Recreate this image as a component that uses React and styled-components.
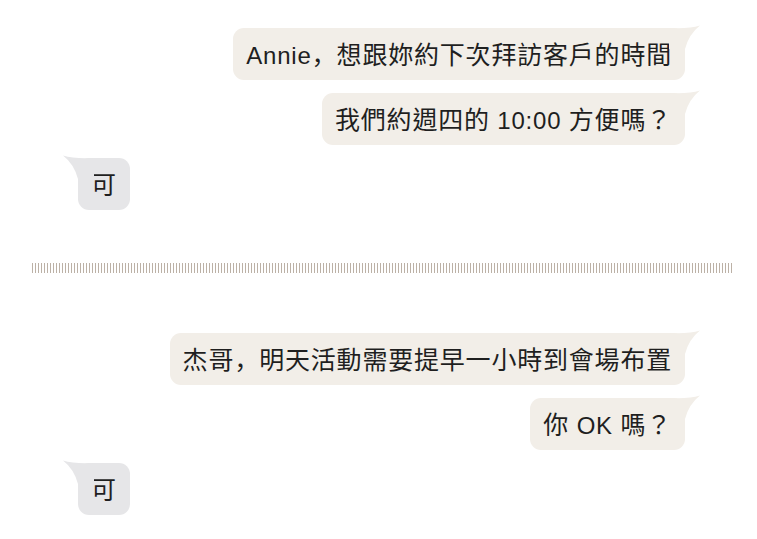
import styled, { createGlobalStyle } from "styled-components";

const GlobalStyle = createGlobalStyle`
  html, body {
    margin: 0;
    padding: 0;
    background: #ffffff;
  }
  body {
    font-family: "Noto Sans CJK TC", "Liberation Sans", sans-serif;
    color: #1f1f1f;
  }
`;

const Page = styled.div`
  width: 757px;
  height: 539px;
  box-sizing: border-box;
  padding-top: 28px;
  overflow: hidden;
`;

const Thread = styled.div`
  display: flex;
  flex-direction: column;
  gap: 13px;
  padding: 0 72px 0 78px;
`;

const Row = styled.div`
  display: flex;
  justify-content: ${(props) => (props.$mine ? "flex-end" : "flex-start")};
`;

const Bubble = styled.div`
  position: relative;
  box-sizing: border-box;
  height: 52px;
  padding: 12px 13px 14px 13px;
  border-radius: 11px;
  font-family: "Noto Sans CJK TC", sans-serif;
  font-size: 25px;
  line-height: 26px;
  letter-spacing: 0.8px;
  text-spacing-trim: space-all;
  white-space: nowrap;
  background: ${(props) => (props.$mine ? "#f2eee8" : "#e6e6e8")};
`;

const Latin = styled.span`
  font-family: "Liberation Sans", Arial, sans-serif;
  font-size: 24px;
`;

const Comma = styled.span`
  display: inline-block;
  width: 1em;
  font-family: "Noto Sans CJK SC", sans-serif;
`;

const TailSvg = styled.svg`
  position: absolute;
  top: -3px;
  width: 36px;
  height: 26px;
  ${(props) => (props.$mine ? "right: -16px;" : "left: -16px; transform: scaleX(-1);")}
`;

const Divider = styled.div`
  height: 10px;
  margin: 53px 24px 60px 32px;
  background: repeating-linear-gradient(
    to right,
    #bcb1a6 0,
    #bcb1a6 1.5px,
    transparent 1.5px,
    transparent 3px
  );
`;

function Tail({ mine }) {
  return (
    <TailSvg $mine={mine} viewBox="0 0 36 26">
      <path
        d="M4 3 Q 24 4 35 0.5 Q 24 9 20 24 L 4 24 Z"
        fill={mine ? "#f2eee8" : "#e6e6e8"}
      />
    </TailSvg>
  );
}

function Message({ mine, children }) {
  return (
    <Row $mine={mine}>
      <Bubble $mine={mine}>
        <Tail mine={mine} />
        {children}
      </Bubble>
    </Row>
  );
}

export default function App() {
  return (
    <Page>
      <GlobalStyle />
      <Thread>
        <Message mine>
          <Latin>Annie</Latin>
          <Comma>，</Comma>想跟妳約下次拜訪客戶的時間
        </Message>
        <Message mine>
          我們約週四的<Latin> 10:00 </Latin>方便嗎？
        </Message>
        <Message>可</Message>
      </Thread>
      <Divider />
      <Thread>
        <Message mine>
          杰哥<Comma>，</Comma>明天活動需要提早一小時到會場布置
        </Message>
        <Message mine>
          你<Latin> OK </Latin>嗎？
        </Message>
        <Message>可</Message>
      </Thread>
    </Page>
  );
}
